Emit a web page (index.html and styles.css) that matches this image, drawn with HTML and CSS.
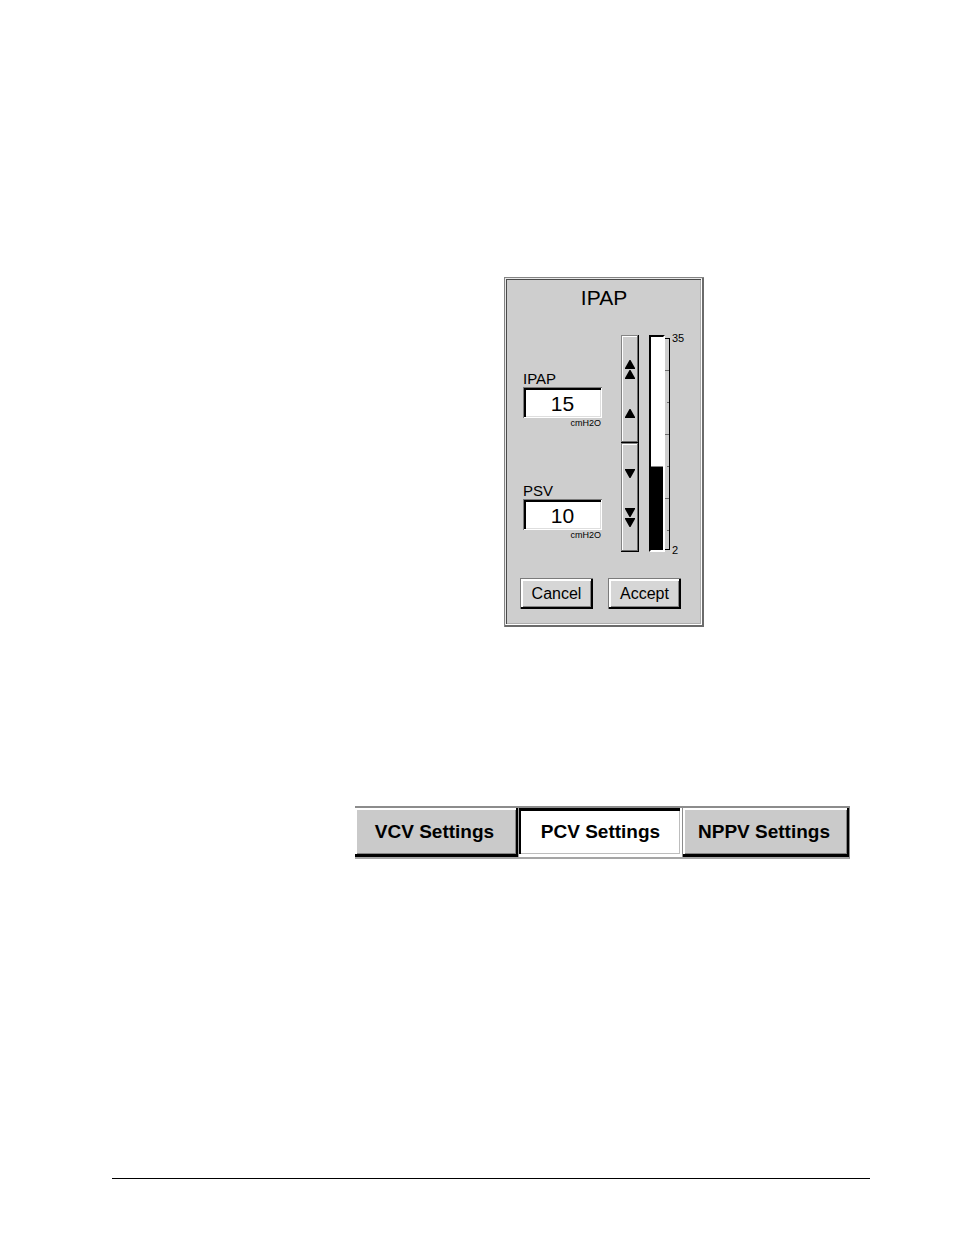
FILE: index.html
```
<!DOCTYPE html>
<html lang="en">
<head>
  <meta charset="utf-8" />
  <meta name="viewport" content="width=device-width, initial-scale=1.0">
  <title>IPAP</title>
  <link rel="stylesheet" href="styles.css">
</head>

<body>
  <main class="content">
    <!-- Settings dialog -->
    <form class="dialog">
      <h1>IPAP</h1>

      <div class="dialog-body">
        <div class="fields">
          <div class="field">
            <label for="ipap">IPAP</label>
            <input type="text" id="ipap" value="15" />
            <span class="unit">cmH2O</span>
          </div>
          <div class="field">
            <label for="psv">PSV</label>
            <input type="text" id="psv" value="10" />
            <span class="unit">cmH2O</span>
          </div>
        </div>

        <div class="stepper">
          <button type="button" class="step up" aria-label="Increase">
            <svg width="10" height="20" viewBox="0 0 10 20"><path d="M4.5 0h1L10 8v1H0V8zM4.5 10h1l4.500 8v1H0v-1z" /></svg>
            <svg width="10" height="10" viewBox="0 0 10 10"><path d="M4.5 0h1L10 8v1H0V8z" /></svg>
          </button>
          <button type="button" class="step down" aria-label="Decrease">
            <svg width="10" height="10" viewBox="0 0 10 10"><path d="M0 0h10v1L5.500 9h-1L0 1z" /></svg>
            <svg width="10" height="20" viewBox="0 0 10 20"><path d="M0 0h10v1L5.500 9h-1L0 1zM0 10h10v1l-4.500 8h-1L0 11z" /></svg>
          </button>
        </div>

        <div class="gauge" role="meter" aria-label="IPAP" aria-valuemin="2" aria-valuemax="35" aria-valuenow="15">
          <div class="gauge-fill" style="height: 39%"></div>
        </div>

        <svg class="scale" width="6" height="217" viewBox="0 0 6 217" shape-rendering="crispEdges">
          <path class="minor" d="M0 35h4v1H0zM2 67h2v1H2zM0 99h4v1H0zM2 131h2v1H2zM0 163h4v1H0zM2 195h2v1H2z" />
          <path d="M0 3h5v212H0v-1h4V4H0z" />
        </svg>
        <div class="scale-labels">
          <span>35</span>
          <span>2</span>
        </div>
      </div>

      <div class="actions">
        <button type="button">Cancel</button>
        <button type="button">Accept</button>
      </div>
    </form>

    <!-- Mode tabs -->
    <div class="tabs" role="tablist">
      <button type="button" class="tab" role="tab" aria-selected="false">VCV Settings</button>
      <button type="button" class="tab active" role="tab" aria-selected="true">PCV Settings</button>
      <button type="button" class="tab" role="tab" aria-selected="false">NPPV Settings</button>
    </div>
  </main>

  <hr />
</body>
</html>
```
FILE: styles.css
```
html, body {
  margin: 0;
  padding: 0;
  background: #fff;
  color: #000;
  font-family: "Liberation Sans", Arial, sans-serif;
}

body {
  display: flex;
  flex-direction: column;
  min-height: 100vh;
  box-sizing: border-box;
  padding: 277px 84px 56px 112px;
}

button, input {
  box-sizing: border-box;
  margin: 0;
  padding: 0;
  border-radius: 0;
  color: #000;
  font-family: inherit;
}

.content {
  display: flex;
  flex-direction: column;
  align-items: center;
  gap: 179px;
  padding: 0 17px 0 243px;
}

/* Dialog */
.dialog {
  box-sizing: border-box;
  width: 200px;
  padding: 9px 16px 18px;
  background: #cecece;
  box-shadow:
    inset 1px 1px #848484,
    inset -2px -2px #6b6b6b,
    inset 2px 2px #e8e8e8,
    inset -3px -3px #fff,
    inset 3px 3px #4a4a4a,
    inset -4px -4px #adadad;
}

.dialog h1 {
  margin: 0 0 25px;
  font-size: 21px;
  font-weight: normal;
  line-height: 24px;
  text-align: center;
}

.dialog-body {
  display: flex;
  margin: 0 0 26px 3px;
}

.fields {
  display: flex;
  flex-direction: column;
  gap: 53px;
  width: 79px;
  margin-right: 19px;
  padding-top: 36px;
}

.field {
  display: flex;
  flex-direction: column;
}

.field label {
  font-size: 15px;
  line-height: 16px;
}

.field input {
  width: 100%;
  height: 31px;
  padding-top: 2px;
  border: 0;
  background: #fff;
  box-shadow:
    inset 1px 1px #7b7b7b,
    inset -1px -1px #fff,
    inset 3px 3px #000,
    inset -2px -2px #dedede;
  font-size: 21px;
  text-align: center;
}

.unit {
  padding-right: 1px;
  font-size: 9px;
  line-height: 10px;
  margin-bottom: 2px;
  text-align: right;
}

/* Up / down buttons */
.stepper {
  display: flex;
  flex-direction: column;
  width: 18px;
  margin-right: 10px;
}

.step {
  display: flex;
  flex: 1;
  flex-direction: column;
  align-items: center;
  border: 0;
  background: #cecece;
  box-shadow:
    inset -1px -1px #000,
    inset 1px 1px #848484,
    inset -2px -2px #6b6b6b,
    inset 2px 2px #fff;
}

.step.up {
  gap: 29px;
  padding-top: 25px;
}

.step.down {
  gap: 29px;
  padding-top: 26px;
}

/* Level gauge */
.gauge {
  display: flex;
  flex-direction: column;
  justify-content: flex-end;
  box-sizing: border-box;
  width: 16px;
  height: 217px;
  border: 2px solid #000;
  border-right-color: #fff;
  border-bottom-color: #fff;
  background: #fff;
}

.gauge-fill {
  border-top: 1px solid #848484;
  background: #000;
}

.scale .minor {
  fill: #6b6b6b;
}

.scale-labels {
  display: flex;
  flex-direction: column;
  justify-content: space-between;
  padding-left: 1px;
  margin: -3px 0 -4px;
  font-size: 11px;
  line-height: 12px;
}

/* Cancel / Accept */
.actions {
  display: flex;
  gap: 15px;
}

.actions button {
  width: 73px;
  height: 31px;
  border: 0;
  background: #d6d6d6;
  box-shadow:
    inset 1px 1px #7b7b7b,
    inset -2px -2px #000,
    inset 3px 3px #fff,
    inset -3px -3px #848484;
  font-size: 16px;
}

/* Tabs */
.tabs {
  display: grid;
  grid-template-columns: 163fr 165fr 166fr;
  align-self: stretch;
  box-sizing: border-box;
  margin-right: 3px;
  border-top: 2px solid #8c8c8c;
  border-right: 1px solid #8c8c8c;
  border-bottom: 2px solid #a5a5a5;
}

.tab {
  height: 49px;
  padding: 0 4px 2px 0;
  border: 0;
  background: #cacaca;
  box-shadow:
    inset -2px -3px #000,
    inset 2px 2px #fff,
    inset -3px -4px #848484;
  font-size: 19px;
  font-weight: bold;
}

.tab.active {
  padding-right: 0;
  border-left: 1px solid #a5a5a5;
  border-right: 1px solid #8c8c8c;
  background: #fff;
  box-shadow:
    inset -2px -3px #fff,
    inset 2px 3px #000,
    inset -3px -4px #bdbdbd;
}

hr {
  width: 100%;
  margin: auto 0 0;
  border: none;
  border-top: 1px solid #000;
}
```
